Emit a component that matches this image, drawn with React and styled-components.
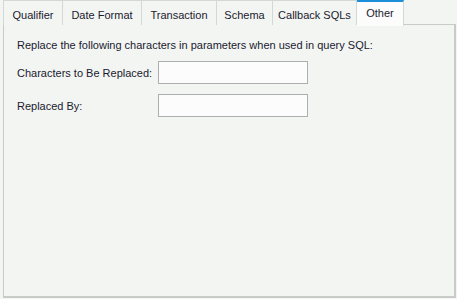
import styled, { createGlobalStyle } from "styled-components"

const tabs = [
  { label: "Qualifier", width: 60 },
  { label: "Date Format", width: 79 },
  { label: "Transaction", width: 75 },
  { label: "Schema", width: 56 },
  { label: "Callback SQLs", width: 84 },
  { label: "Other", width: 47 },
]

export default function App(){
  return(
    <>
      <GlobalStyle />
      <Page>
        <TabStrip>
          {tabs.map((t, i) => (
            <Tab key={t.label} $width={t.width} $active={t.label === "Other"} $first={i === 0}>{t.label}</Tab>
          ))}
        </TabStrip>
        <Panel>
          <Intro>Replace the following characters in parameters when used in query SQL:</Intro>
          <FieldRow>
            <Label>Characters to Be Replaced:</Label>
            <Input type="text" />
          </FieldRow>
          <FieldRow>
            <Label>Replaced By:</Label>
            <Input type="text" />
          </FieldRow>
        </Panel>
      </Page>
    </>
  )
}

const GlobalStyle = createGlobalStyle`
html, body{
  margin: 0;
  padding: 0;
  background: #f3f5f2;
}
body{
  font-family: "Liberation Sans", Arial, sans-serif;
  font-size: 11px;
  color: #1a1a30;
}
`

const Page = styled.div`
width: 457px;
height: 299px;
display: flex;
flex-direction: column;
padding: 0 1px 1px 3px;
box-sizing: border-box;
`

const TabStrip = styled.div`
display: flex;
height: 25px;
position: relative;
z-index: 1;
`

const Tab = styled.div`
box-sizing: border-box;
width: ${p => p.$width}px;
height: ${p => p.$active ? "26px" : "25px"};
display: flex;
align-items: center;
justify-content: center;
padding-top: ${p => p.$active ? "0" : "3px"};
padding-bottom: ${p => p.$active ? "2px" : "0"};
border-top: ${p => p.$active ? "2px solid #1b8fd9" : "1px solid #d5d7d4"};
border-right: 1px solid #d5d7d4;
border-left: ${p => p.$first ? "1px solid #d5d7d4" : "none"};
background: ${p => p.$active ? "#fbfcfb" : "#f3f5f2"};
white-space: nowrap;
`

const Panel = styled.div`
flex: 1;
border: 1px solid #c9cbc8;
border-width: 1px 2px 2px 1px;
background: #f3f5f2;
padding: 14px 13px;
display: flex;
flex-direction: column;
gap: 10px;
margin-top: -1px;
`

const Intro = styled.div`
line-height: 14px;
margin-top: -1px;
margin-bottom: -1px;
`

const FieldRow = styled.div`
display: flex;
align-items: center;
`

const Label = styled.label`
width: 141px;
`

const Input = styled.input`
box-sizing: border-box;
width: 150px;
height: 23px;
margin: 0;
border: 1px solid #acaeb0;
background: #fbfcfb;
outline: none;
`
